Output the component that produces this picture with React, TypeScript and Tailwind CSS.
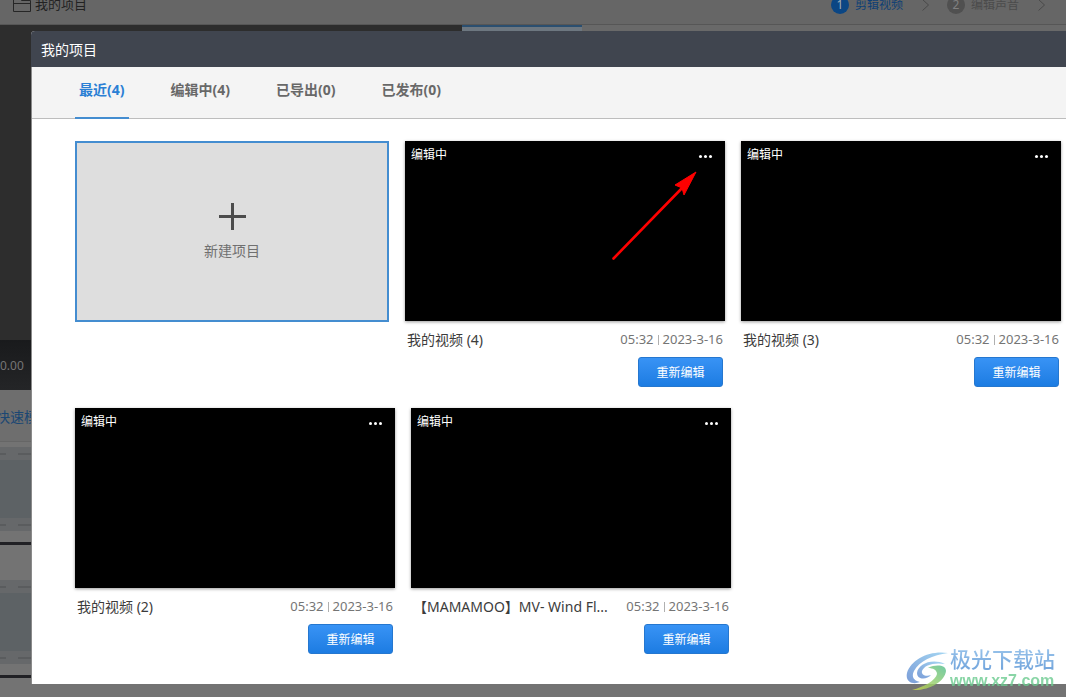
import React, { ReactNode } from 'react';

interface Project {
  id: number;
  title: string;
  status: string;
  duration: string;
  date: string;
}

interface Tab {
  label: string;
  active?: boolean;
}

const projects: Project[] = [
  { id: 4, title: '我的视频 (4)', status: '编辑中', duration: '05:32', date: '2023-3-16' },
  { id: 3, title: '我的视频 (3)', status: '编辑中', duration: '05:32', date: '2023-3-16' },
  { id: 2, title: '我的视频 (2)', status: '编辑中', duration: '05:32', date: '2023-3-16' },
  { id: 1, title: '【MAMAMOO】MV- Wind Fl...', status: '编辑中', duration: '05:32', date: '2023-3-16' }
];

const tabs: Tab[] = [
  { label: '最近(4)', active: true },
  { label: '编辑中(4)' },
  { label: '已导出(0)' },
  { label: '已发布(0)' }
];

function Chevron() {
  return (
    <svg width="9" height="12" viewBox="0 0 9 12" fill="none" stroke="#4a4a4a" className="ml-[18px] mr-[17px] shrink-0">
      <path d="M1.5 0.5 L7.5 6 L1.5 11.5" />
    </svg>
  );
}

function Step({ number, children, active }: { number?: string; children?: ReactNode; active?: boolean }) {
  return (
    <>
      <span
        className={`flex size-[18px] shrink-0 items-center justify-center rounded-full text-xs ${
          active ? 'bg-[#0b4684] text-[#a3adb8]' : 'bg-[#505050] text-[#808080]'
        }`}
      >
        {number}
      </span>
      <span className={`ml-1.5 shrink-0 text-xs ${active ? 'text-[#0d3f75]' : 'text-[#4b4b4b]'}`}>{children}</span>
    </>
  );
}

function TopBar() {
  return (
    <header className="flex h-[25px] items-start justify-between border-b border-[#565656] bg-[#666666]">
      <div className="flex h-[10px] items-center pl-[13px]">
        <svg width="18" height="16" viewBox="0 0 18 16" fill="none" stroke="#262626" className="shrink-0">
          <path d="M0.5 14.5 V1.5 H6.5 L8.5 3.5 H17.5 V14.5 Z M0.5 6.5 H17.5" />
        </svg>
        <span className="ml-1 text-[13px] text-[#222222]">我的项目</span>
      </div>
      <nav className="flex h-[10px] w-[235px] shrink-0 items-center">
        <Step number="1" active>剪辑视频</Step>
        <Chevron />
        <Step number="2">编辑声音</Step>
        <Chevron />
      </nav>
    </header>
  );
}

function TrackDashes() {
  return (
    <div className="flex h-[13px] shrink-0 items-center gap-3 bg-[#66686a]">
      <span className="h-0.5 w-1.5 bg-[#5a5c5e]" />
      <span className="h-0.5 w-[18px] bg-[#5a5c5e]" />
    </div>
  );
}

function Track() {
  return (
    <div className="flex h-[84px] flex-col">
      <TrackDashes />
      <div className="flex-1 bg-[#5d6265]" />
      <TrackDashes />
    </div>
  );
}

// Editor behind the dialog, already dimmed
function EditorBackdrop() {
  return (
    <div className="flex min-h-screen flex-col overflow-hidden bg-[#737373]">
      <TopBar />
      <div className="flex h-[315px]">
        <div className="w-[462px] bg-[#2d2d2d]" />
        <div className="w-[120px] border-t-2 border-[#2b4f70] bg-[#6d7780]" />
        <div className="flex-1 bg-[#696969]" />
      </div>
      <div className="flex h-[50px] items-center bg-linear-to-b from-[#191a1c] to-[#242527] pt-0.5 text-xs text-[#757575]">
        0.00
      </div>
      <div className="flex h-[52px] items-center border-b border-[#666666] bg-[#6e6e6e] pt-0.5">
        <span className="-ml-1 text-sm text-[#1b4773]">快速模板</span>
      </div>
      <div className="flex h-[103px] flex-col border-b-3 border-[#202024] pt-[5px]">
        <Track />
      </div>
      <div className="flex h-[133px] flex-col border-b-3 border-[#202024] pt-[35px]">
        <Track />
      </div>
    </div>
  );
}

function NewProjectCard() {
  return (
    <button className="flex h-[181px] w-[314px] flex-col items-center border-2 border-[#448dd0] bg-[#dedede] pt-[60px]">
      <svg width="27" height="27" viewBox="0 0 27 27" stroke="#4c4c4c" strokeWidth="3">
        <path d="M13.5 0 V27 M0 13.5 H27" />
      </svg>
      <span className="mt-[11px] text-sm leading-5 text-[#707070]">新建项目</span>
    </button>
  );
}

function ProjectCard({ project }: { project: Project }) {
  return (
    <article className="w-[320px]">
      <div className="flex h-[180px] items-start justify-between bg-black pt-1 pr-[13px] pl-1.5 text-xs leading-5 text-white shadow-[0_1px_3px_rgba(0,0,0,0.4)]">
        <span>{project.status}</span>
        <button aria-label="更多" className="flex h-[22px] items-center gap-0.5">
          <span className="size-[3px] rounded-full bg-white" />
          <span className="size-[3px] rounded-full bg-white" />
          <span className="size-[3px] rounded-full bg-white" />
        </button>
      </div>
      <div className="flex h-9 items-center justify-between px-0.5 pt-0.5 whitespace-nowrap">
        <h3 className="text-sm text-[#3c3c3c]">{project.title}</h3>
        <p className="flex items-center gap-1 text-[13px] text-[#757575]">
          {project.duration}
          <span className="h-2.5 w-px bg-[#b0b0b0]" />
          {project.date}
        </p>
      </div>
      <div className="flex justify-end pr-0.5">
        <button className="h-[30px] w-[85px] rounded-[3px] border border-[#2577cf] bg-linear-to-b from-[#3893f5] to-[#1c7ce2] pt-0.5 text-xs text-white">
          重新编辑
        </button>
      </div>
    </article>
  );
}

function RedArrow() {
  return (
    <svg width="86" height="92" viewBox="0 0 86 92" className="pointer-events-none absolute top-[29px] left-[206px]">
      <path d="M2.5 88.5 L74 15" stroke="#fe0000" strokeWidth="2.6" strokeLinecap="round" />
      <path d="M85 2 L64 15 L71 18 L73 25 Z" fill="#fe0000" stroke="#fe0000" strokeLinejoin="round" />
    </svg>
  );
}

function Watermark() {
  return (
    <div className="pointer-events-none absolute right-[11px] bottom-[5px] flex items-center gap-0.5 opacity-80">
      <svg width="42" height="42" viewBox="0 0 42 42">
        <defs>
          <linearGradient id="swirlBlue" x1="0" y1="1" x2="1" y2="0">
            <stop offset="0" stopColor="#5b86cf" />
            <stop offset="1" stopColor="#8fcdf0" />
          </linearGradient>
          <linearGradient id="swirlGreen" x1="0" y1="1" x2="1" y2="0">
            <stop offset="0" stopColor="#d3de4c" />
            <stop offset="1" stopColor="#4fbd8d" />
          </linearGradient>
        </defs>
        <path d="M42 4 C24 1 5 10 1 24 C-1 33 7 36 14 33 C8 32 5 28 8 22 C13 12 27 6 42 4 Z" fill="url(#swirlBlue)" />
        <path d="M39 15 C26 9 12 15 11 24 C11 31 21 31 25 26 C20 28 15 26 16 22 C18 16 28 13 39 15 Z" fill="url(#swirlBlue)" />
        <path d="M22 19 C30 15 40 16 40 22 C39 32 24 42 6 41 C18 38 30 31 31 25 C31 21 27 19 22 19 Z" fill="url(#swirlGreen)" />
      </svg>
      <div className="flex flex-col">
        <span className="bg-linear-to-b from-[#80b5e6] to-[#4f8fd4] bg-clip-text text-[21px] leading-[22px] font-medium text-transparent">
          极光下载站
        </span>
        <span className="font-['Liberation_Sans',sans-serif] text-base leading-[22px] font-bold text-[#6ccb90]">
          www.xz7.com
        </span>
      </div>
    </div>
  );
}

function ProjectDialog() {
  return (
    <section role="dialog" aria-label="我的项目" className="flex flex-1 flex-col overflow-hidden rounded-tl-[4px] bg-white">
      <h2 className="flex h-9 items-center bg-[#40454f] pt-0.5 pl-[10px] text-sm text-white">我的项目</h2>
      <div className="flex flex-1 flex-col border-l border-[#8a8a8a]">
        <div className="flex h-[52px] gap-[38px] border-b border-[#bdbdbd] bg-[#f4f4f4] pl-[43px]">
          {tabs.map((tab) => (
            <button
              key={tab.label}
              className={`-mb-px border-b-2 px-1 pb-1 text-sm font-bold ${
                tab.active ? 'border-[#448dd0] text-[#2a7fd4]' : 'border-transparent text-[#686868]'
              }`}
            >
              {tab.label}
            </button>
          ))}
        </div>
        <div className="flex flex-wrap content-start gap-x-4 gap-y-[21px] pt-[22px] pl-[43px]">
          <NewProjectCard />
          {projects.map((project, index) => (
            <div key={project.id} className="relative">
              <ProjectCard project={project} />
              {index === 0 && <RedArrow />}
            </div>
          ))}
        </div>
      </div>
    </section>
  );
}

export default function App() {
  return (
    <main className="relative min-h-screen overflow-hidden font-['Noto_Sans','Noto_Sans_CJK_SC',sans-serif]">
      <EditorBackdrop />
      <div className="absolute inset-0 flex pt-[31px] pb-[13px] pl-[31px]">
        <ProjectDialog />
      </div>
      <Watermark />
    </main>
  );
}
